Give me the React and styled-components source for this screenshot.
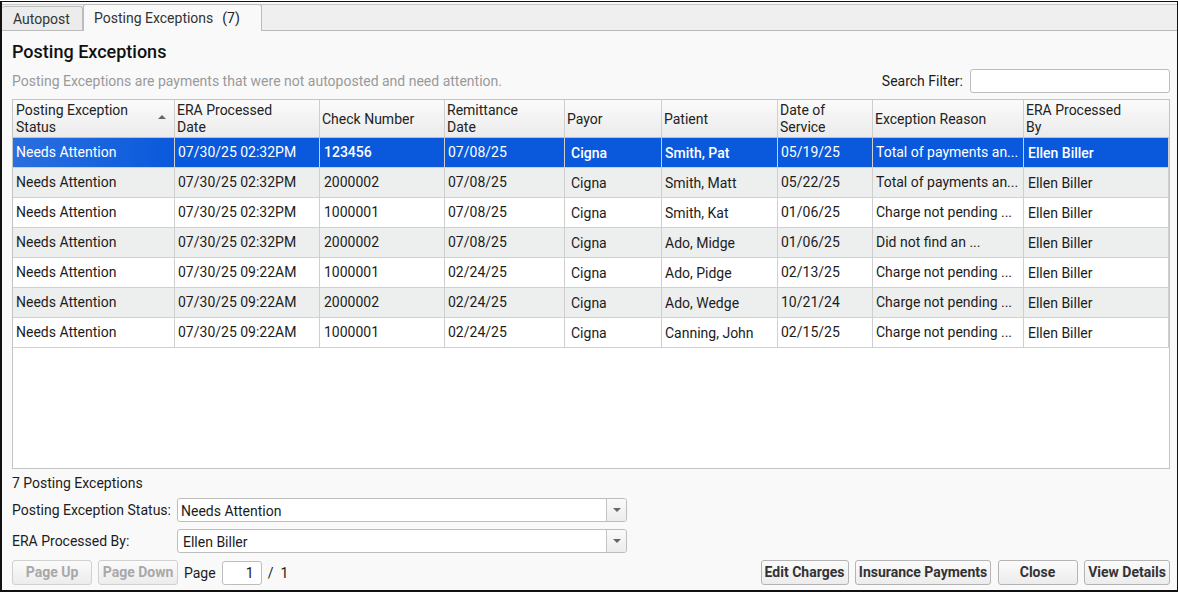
import styled, { createGlobalStyle } from 'styled-components'

const columns = '162px 145px 125px 120px 97px 116px 95px 151px 1fr'

const headers = [
  { label: 'Posting Exception Status', sorted: true, pad: 3, wrap: 24 },
  { label: 'ERA Processed Date', pad: 2, wrap: 30 },
  { label: 'Check Number', pad: 2, wrap: 4 },
  { label: 'Remittance Date', pad: 2, wrap: 30 },
  { label: 'Payor', pad: 2, wrap: 4 },
  { label: 'Patient', pad: 2, wrap: 4 },
  { label: 'Date of Service', pad: 2, wrap: 30 },
  { label: 'Exception Reason', pad: 2, wrap: 4 },
  { label: 'ERA Processed By', pad: 2, wrap: 40 }
]

const rows = [
  ['07/30/25 02:32PM', '123456', '07/08/25', 'Smith, Pat', '05/19/25', 'Total of payments an...'],
  ['07/30/25 02:32PM', '2000002', '07/08/25', 'Smith, Matt', '05/22/25', 'Total of payments an...'],
  ['07/30/25 02:32PM', '1000001', '07/08/25', 'Smith, Kat', '01/06/25', 'Charge not pending ...'],
  ['07/30/25 02:32PM', '2000002', '07/08/25', 'Ado, Midge', '01/06/25', 'Did not find an ...'],
  ['07/30/25 09:22AM', '1000001', '02/24/25', 'Ado, Pidge', '02/13/25', 'Charge not pending ...'],
  ['07/30/25 09:22AM', '2000002', '02/24/25', 'Ado, Wedge', '10/21/24', 'Charge not pending ...'],
  ['07/30/25 09:22AM', '1000001', '02/24/25', 'Canning, John', '02/15/25', 'Charge not pending ...']
]

export default function App() {
  return (
    <>
      <GlobalStyle />
      <Frame>
        <TabBar>
          <Tab>Autopost</Tab>
          <Tab $active>
            Posting Exceptions<TabCount>(7)</TabCount>
          </Tab>
        </TabBar>

        <Content>
          <Title>Posting Exceptions</Title>
          <InfoRow>
            <Hint>Posting Exceptions are payments that were not autoposted and need attention.</Hint>
            <SearchLabel>Search Filter:</SearchLabel>
            <SearchInput />
          </InfoRow>

          <TableBox>
            <HeaderRow>
              {headers.map((h) => (
                <HeaderCell key={h.label} $pad={h.pad} $wrap={h.wrap}>
                  <span>{h.label}</span>
                  {h.sorted && <SortArrow />}
                </HeaderCell>
              ))}
            </HeaderRow>
            {rows.map((r, i) => (
              <Row key={i} $selected={i === 0} $striped={i % 2 === 1}>
                <Cell $pad={3} $first={i === 0}>Needs Attention</Cell>
                <Cell $pad={3}>{r[0]}</Cell>
                <Cell $pad={4} $strong={i === 0}>{r[1]}</Cell>
                <Cell $pad={3}>{r[2]}</Cell>
                <Cell $pad={6} $low $strong={i === 0}>Cigna</Cell>
                <Cell $pad={3} $low $strong={i === 0}>{r[3]}</Cell>
                <Cell $pad={3}>{r[4]}</Cell>
                <Cell $pad={3}>{r[5]}</Cell>
                <Cell $pad={4} $low $strong={i === 0}>Ellen Biller</Cell>
              </Row>
            ))}
          </TableBox>

          <CountLine>7 Posting Exceptions</CountLine>

          <FilterRow>
            <FilterLabel>Posting Exception Status:</FilterLabel>
            <Combo>
              <ComboValue $pad={3}>Needs Attention</ComboValue>
              <ComboButton><ComboArrow /></ComboButton>
            </Combo>
          </FilterRow>
          <FilterRow>
            <FilterLabel>ERA Processed By:</FilterLabel>
            <Combo>
              <ComboValue $pad={5}>Ellen Biller</ComboValue>
              <ComboButton><ComboArrow /></ComboButton>
            </Combo>
          </FilterRow>

          <Footer>
            <Button disabled $w={80}>Page Up</Button>
            <Button disabled $w={80}>Page Down</Button>
            <PageLabel>Page</PageLabel>
            <PageInput>1</PageInput>
            <PageTotal>/&nbsp;&nbsp;1</PageTotal>
            <FooterRight>
              <Button $w={88}>Edit Charges</Button>
              <Button $w={136}>Insurance Payments</Button>
              <Button $w={80}>Close</Button>
              <Button $w={86}>View Details</Button>
            </FooterRight>
          </Footer>
        </Content>
      </Frame>
    </>
  )
}

const GlobalStyle = createGlobalStyle`
  html, body {
    margin: 0;
    padding: 0;
    background: #fff;
  }
  body {
    font-family: Roboto, "Liberation Sans", sans-serif;
    font-size: 14px;
    color: #1c1c1c;
  }
`

const Frame = styled.div`
  box-sizing: border-box;
  width: 1178px;
  height: 591px;
  margin-top: 1px;
  border: 1px solid #111;
  border-left-width: 2px;
  border-bottom-width: 2px;
  background: #f9f9f9;
  padding-top: 2px;
`

const TabBar = styled.div`
  display: flex;
  align-items: flex-end;
  height: 27px;
  box-sizing: border-box;
  background: #efefef;
  border-top: 1px solid #c8c8c8;
  border-bottom: 1px solid #b8b8b8;
`

const Tab = styled.div`
  box-sizing: border-box;
  display: flex;
  align-items: center;
  height: ${(p) => (p.$active ? '27px' : '25px')};
  width: ${(p) => (p.$active ? '179px' : '81px')};
  padding: ${(p) => (p.$active ? '0 0 1px 10px' : '0 0 0 11px')};
  margin-bottom: -1px;
  background: ${(p) => (p.$active ? '#f9f9f9' : '#ececec')};
  border: 1px solid #bcbcbc;
  border-bottom: ${(p) => (p.$active ? 'none' : '1px solid #bcbcbc')};
  border-left: ${(p) => (p.$active ? '1px solid #bcbcbc' : 'none')};
  border-radius: 3px 3px 0 0;
  color: #333;
  font-size: 14px;
`

const TabCount = styled.span`
  margin-left: 9px;
  color: #222;
`

const Content = styled.div`
  display: flex;
  flex-direction: column;
  padding: 0 7px 0 10px;
`

const Title = styled.h1`
  margin: 10px 0 0;
  height: 22px;
  line-height: 22px;
  font-size: 18px;
  font-weight: 500;
  color: #111;
`

const InfoRow = styled.div`
  display: flex;
  align-items: center;
  height: 24px;
  margin-top: 6px;
`

const Hint = styled.div`
  flex: 1;
  color: #9a9a9a;
  font-size: 14px;
`

const SearchLabel = styled.div`
  margin-right: 7px;
  font-size: 14px;
`

const SearchInput = styled.div`
  box-sizing: border-box;
  width: 200px;
  height: 24px;
  background: #fff;
  border: 1px solid #bdbdbd;
  border-radius: 3px;
`

const TableBox = styled.div`
  box-sizing: border-box;
  height: 370px;
  margin-top: 6px;
  background: #fff;
  border: 1px solid #c4c4c4;
`

const HeaderRow = styled.div`
  display: grid;
  grid-template-columns: ${columns};
  height: 37px;
  background: linear-gradient(#fbfbfb, #ebebeb);
  border-bottom: 1px solid #c0c0c0;
`

const HeaderCell = styled.div`
  position: relative;
  display: flex;
  align-items: center;
  box-sizing: border-box;
  padding: 1px ${(p) => p.$wrap}px 0 ${(p) => p.$pad}px;
  line-height: 17px;
  font-size: 14px;
  color: #222;
  border-right: 1px solid #cfcfcf;
  &:last-child {
    border-right: none;
  }
`

const SortArrow = styled.i`
  position: absolute;
  right: 8px;
  top: 15px;
  border-left: 4px solid transparent;
  border-right: 4px solid transparent;
  border-bottom: 4px solid #666;
`

const Row = styled.div`
  display: grid;
  grid-template-columns: ${columns};
  height: 30px;
  box-sizing: border-box;
  border-bottom: 1px solid #d0d0d0;
  background: ${(p) => (p.$selected ? '#0a59dc' : p.$striped ? '#edefef' : '#fff')};
  color: ${(p) => (p.$selected ? '#fff' : '#1c1c1c')};
`

const Cell = styled.div`
  display: flex;
  align-items: center;
  box-sizing: border-box;
  padding: ${(p) => (p.$low ? '1px' : '0')} 0 ${(p) => (p.$low ? '0' : '1px')} ${(p) => p.$pad}px;
  white-space: nowrap;
  overflow: hidden;
  font-size: 14px;
  font-weight: ${(p) => (p.$strong ? 500 : 400)};
  border-right: 1px solid #cfcfcf;
  background: ${(p) => (p.$first ? 'linear-gradient(90deg, #2a6fdf, #0a59dc)' : 'none')};
`

const CountLine = styled.div`
  height: 17px;
  line-height: 18px;
  margin-top: 5px;
  font-size: 14px;
`

const FilterRow = styled.div`
  display: flex;
  align-items: center;
  height: 24px;
  margin-top: 7px;
`

const FilterLabel = styled.div`
  width: 165px;
  font-size: 14px;
`

const Combo = styled.div`
  box-sizing: border-box;
  display: flex;
  width: 450px;
  height: 24px;
  background: #fff;
  border: 1px solid #bdbdbd;
  border-radius: 3px;
`

const ComboValue = styled.div`
  flex: 1;
  padding-left: ${(p) => p.$pad}px;
  line-height: 25px;
  font-size: 14px;
`

const ComboButton = styled.div`
  box-sizing: border-box;
  display: flex;
  align-items: center;
  justify-content: center;
  width: 20px;
  border-left: 1px solid #c4c4c4;
  background: linear-gradient(#fafafa, #ececec);
  border-radius: 0 3px 3px 0;
`

const ComboArrow = styled.i`
  border-left: 4px solid transparent;
  border-right: 4px solid transparent;
  border-top: 4px solid #666;
`

const Footer = styled.div`
  display: flex;
  align-items: center;
  height: 25px;
  margin-top: 7px;
`

const FooterRight = styled.div`
  display: flex;
  gap: 6.5px;
  margin-left: auto;
`

const Button = styled.button`
  box-sizing: border-box;
  width: ${(p) => p.$w}px;
  height: 25px;
  margin-right: ${(p) => (p.disabled ? '6px' : '0')};
  padding: 0 0 1px;
  border: 1px solid ${(p) => (p.disabled ? '#d0d0d0' : '#b4b4b4')};
  border-radius: 3px;
  background: linear-gradient(#fbfbfb, #ececec);
  font-family: Roboto, "Liberation Sans", sans-serif;
  font-size: 14px;
  font-weight: 700;
  color: ${(p) => (p.disabled ? '#a8a8a8' : '#333')};
  white-space: nowrap;
`

const PageLabel = styled.div`
  margin-right: 6px;
  font-size: 14px;
`

const PageInput = styled.div`
  box-sizing: border-box;
  width: 40px;
  height: 24px;
  padding-right: 7px;
  line-height: 23px;
  text-align: right;
  background: #fff;
  border: 1px solid #bdbdbd;
  border-radius: 3px;
`

const PageTotal = styled.div`
  margin-left: 6px;
  font-size: 14px;
`
